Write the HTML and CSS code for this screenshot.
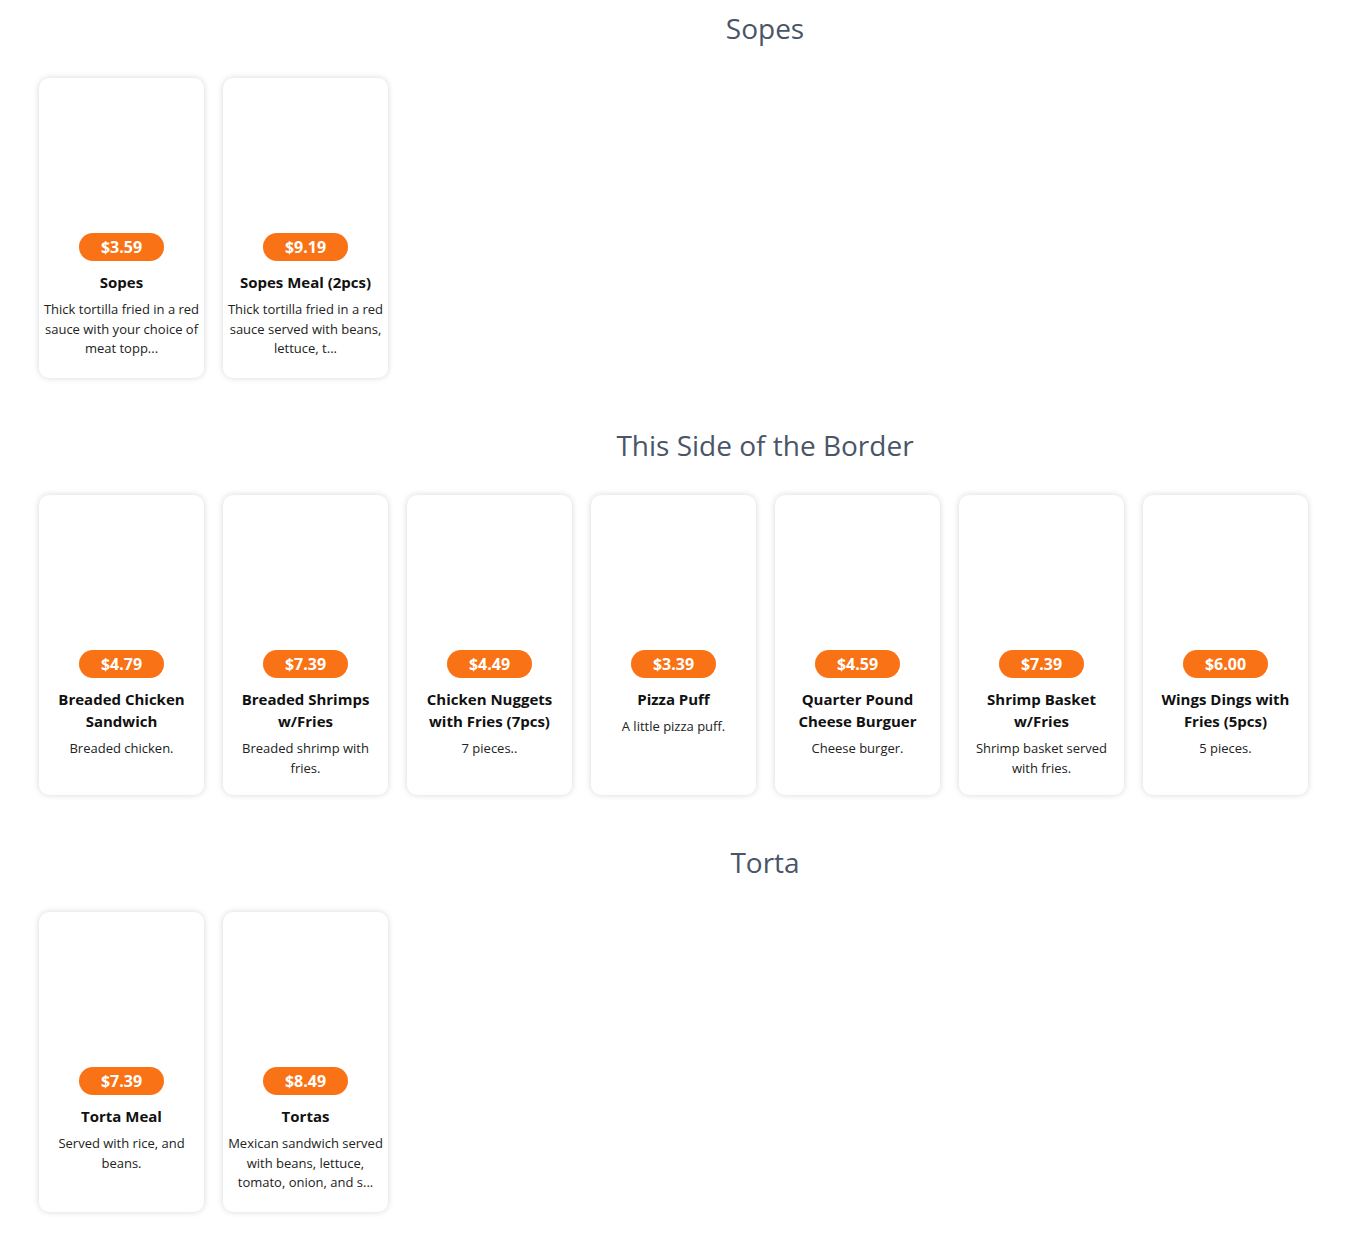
FILE: index.html
```html
<!DOCTYPE html>
<html lang="en">
<head>
<meta charset="utf-8">
<title>Menu</title>
<link rel="stylesheet" href="styles.css">
</head>
<body>
<main class="menu">
  <section class="category">
    <h2 class="category-title">Sopes</h2>
    <div class="grid">
      <article class="card">
        <div class="card-image"></div>
        <span class="price">$3.59</span>
        <h3 class="name">Sopes</h3>
        <p class="desc">Thick tortilla fried in a red sauce with your choice of meat topp...</p>
      </article>
      <article class="card">
        <div class="card-image"></div>
        <span class="price">$9.19</span>
        <h3 class="name">Sopes Meal (2pcs)</h3>
        <p class="desc">Thick tortilla fried in a red sauce served with beans, lettuce, t...</p>
      </article>
    </div>
  </section>

  <section class="category">
    <h2 class="category-title">This Side of the Border</h2>
    <div class="grid">
      <article class="card">
        <div class="card-image"></div>
        <span class="price">$4.79</span>
        <h3 class="name">Breaded Chicken Sandwich</h3>
        <p class="desc">Breaded chicken.</p>
      </article>
      <article class="card">
        <div class="card-image"></div>
        <span class="price">$7.39</span>
        <h3 class="name">Breaded Shrimps w/Fries</h3>
        <p class="desc">Breaded shrimp with fries.</p>
      </article>
      <article class="card">
        <div class="card-image"></div>
        <span class="price">$4.49</span>
        <h3 class="name">Chicken Nuggets with Fries (7pcs)</h3>
        <p class="desc">7 pieces..</p>
      </article>
      <article class="card">
        <div class="card-image"></div>
        <span class="price">$3.39</span>
        <h3 class="name">Pizza Puff</h3>
        <p class="desc">A little pizza puff.</p>
      </article>
      <article class="card">
        <div class="card-image"></div>
        <span class="price">$4.59</span>
        <h3 class="name">Quarter Pound Cheese Burguer</h3>
        <p class="desc">Cheese burger.</p>
      </article>
      <article class="card">
        <div class="card-image"></div>
        <span class="price">$7.39</span>
        <h3 class="name">Shrimp Basket w/Fries</h3>
        <p class="desc">Shrimp basket served with fries.</p>
      </article>
      <article class="card">
        <div class="card-image"></div>
        <span class="price">$6.00</span>
        <h3 class="name">Wings Dings with Fries (5pcs)</h3>
        <p class="desc">5 pieces.</p>
      </article>
    </div>
  </section>

  <section class="category">
    <h2 class="category-title">Torta</h2>
    <div class="grid">
      <article class="card">
        <div class="card-image"></div>
        <span class="price">$7.39</span>
        <h3 class="name">Torta Meal</h3>
        <p class="desc">Served with rice, and beans.</p>
      </article>
      <article class="card">
        <div class="card-image"></div>
        <span class="price">$8.49</span>
        <h3 class="name">Tortas</h3>
        <p class="desc">Mexican sandwich served with beans, lettuce, tomato, onion, and s...</p>
      </article>
    </div>
  </section>
</main>
</body>
</html>
```

FILE: styles.css
```css
* { box-sizing: border-box; }

html, body {
  margin: 0;
  padding: 0;
  background: #ffffff;
}

body {
  font-family: "Open Sans", "Noto Sans", sans-serif;
  color: #111111;
}

.menu {
  padding: 8px 0 31px 39px;
}

.category {
  margin-bottom: 47px;
}

.category:last-child {
  margin-bottom: 0;
}

.category-title {
  margin: 0 0 30px 0;
  padding-left: 141px;
  text-align: center;
  font-size: 28px;
  line-height: 40px;
  font-weight: 400;
  color: #4a5568;
}

.grid {
  display: flex;
  gap: 19px;
}

.card {
  width: 165px;
  height: 300px;
  flex: none;
  background: #ffffff;
  border-radius: 10px;
  box-shadow: 0 0 6px rgba(0, 0, 0, 0.16);
  display: flex;
  flex-direction: column;
  align-items: center;
  padding: 0 4px;
  text-align: center;
}

.card-image {
  height: 155px;
  width: 100%;
  flex: none;
}

.price {
  display: inline-block;
  width: 85px;
  height: 28px;
  line-height: 28px;
  border-radius: 14px;
  background: #f97316;
  color: #ffffff;
  font-weight: 700;
  font-size: 16px;
}

.name {
  margin: 10px 0 0 0;
  font-size: 15px;
  line-height: 22px;
  font-weight: 700;
  color: #111111;
}

.desc {
  margin: 7px 0 0 0;
  font-size: 13px;
  line-height: 19.5px;
  color: #222222;
}
```
